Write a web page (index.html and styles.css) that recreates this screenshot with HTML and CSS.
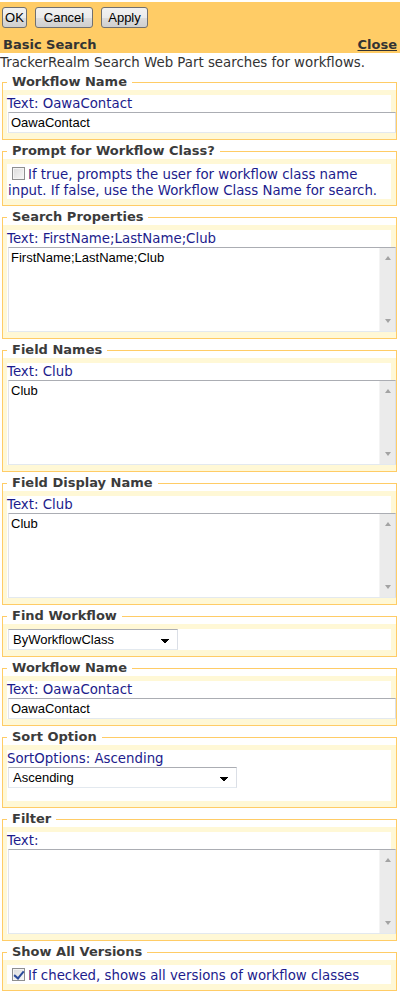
FILE: index.html
```html
<!DOCTYPE html>
<html>
<head>
<meta charset="utf-8">
<title>TrackerRealm Search Web Part</title>
<link rel="stylesheet" href="styles.css">
</head>
<body>
<div class="toolpane">
  <div class="tp-head">
    <div class="tp-buttons">
      <button class="btn btn-ok" type="button">OK</button>
      <button class="btn btn-cancel" type="button">Cancel</button>
      <button class="btn btn-apply" type="button">Apply</button>
    </div>
    <div class="tp-title">
      <span class="title">Basic Search</span>
      <a class="close" href="#">Close</a>
    </div>
  </div>
  <div class="tp-desc">TrackerRealm Search Web Part searches for workflows.</div>

  <fieldset class="grp">
    <legend>Workflow Name</legend>
    <div class="grp-body">
      <div class="ctl">
        <div class="lbl">Text: OawaContact</div>
        <input class="txt" type="text" value="OawaContact">
      </div>
    </div>
  </fieldset>

  <fieldset class="grp">
    <legend>Prompt for Workflow Class?</legend>
    <div class="grp-body">
      <div class="ctl chk-ctl">
        <label><input class="chk" type="checkbox">If true, prompts the user for workflow class name input. If false, use the Workflow Class Name for search.</label>
      </div>
    </div>
  </fieldset>

  <fieldset class="grp">
    <legend>Search Properties</legend>
    <div class="grp-body">
      <div class="ctl">
        <div class="lbl">Text: FirstName;LastName;Club</div>
        <div class="area">
          <textarea class="area-input">FirstName;LastName;Club</textarea>
          <div class="vscroll" aria-hidden="true"><span class="arr arr-up"></span><span class="arr arr-down"></span></div>
        </div>
      </div>
    </div>
  </fieldset>

  <fieldset class="grp">
    <legend>Field Names</legend>
    <div class="grp-body">
      <div class="ctl">
        <div class="lbl">Text: Club</div>
        <div class="area">
          <textarea class="area-input">Club</textarea>
          <div class="vscroll" aria-hidden="true"><span class="arr arr-up"></span><span class="arr arr-down"></span></div>
        </div>
      </div>
    </div>
  </fieldset>

  <fieldset class="grp">
    <legend>Field Display Name</legend>
    <div class="grp-body">
      <div class="ctl">
        <div class="lbl">Text: Club</div>
        <div class="area">
          <textarea class="area-input">Club</textarea>
          <div class="vscroll" aria-hidden="true"><span class="arr arr-up"></span><span class="arr arr-down"></span></div>
        </div>
      </div>
    </div>
  </fieldset>

  <fieldset class="grp">
    <legend>Find Workflow</legend>
    <div class="grp-body">
      <div class="ctl">
        <select class="sel sel-find">
          <option>ByWorkflowClass</option>
        </select>
      </div>
    </div>
  </fieldset>

  <fieldset class="grp">
    <legend>Workflow Name</legend>
    <div class="grp-body">
      <div class="ctl">
        <div class="lbl">Text: OawaContact</div>
        <input class="txt" type="text" value="OawaContact">
      </div>
    </div>
  </fieldset>

  <fieldset class="grp">
    <legend>Sort Option</legend>
    <div class="grp-body">
      <div class="ctl sort-ctl">
        <div class="lbl">SortOptions: Ascending</div>
        <select class="sel sel-sort">
          <option>Ascending</option>
        </select>
      </div>
    </div>
  </fieldset>

  <fieldset class="grp">
    <legend>Filter</legend>
    <div class="grp-body">
      <div class="ctl">
        <div class="lbl">Text:</div>
        <div class="area">
          <textarea class="area-input"></textarea>
          <div class="vscroll" aria-hidden="true"><span class="arr arr-up"></span><span class="arr arr-down"></span></div>
        </div>
      </div>
    </div>
  </fieldset>

  <fieldset class="grp">
    <legend>Show All Versions</legend>
    <div class="grp-body">
      <div class="ctl chk-ctl">
        <label><input class="chk" type="checkbox" checked>If checked, shows all versions of workflow classes</label>
      </div>
    </div>
  </fieldset>
</div>
</body>
</html>
```

FILE: styles.css
```css
* {
  box-sizing: border-box;
}

html,
body {
  margin: 0;
  padding: 0;
  background: #ffffff;
}

body {
  width: 400px;
  font-family: "DejaVu Sans", Verdana, sans-serif;
  font-size: 13.33px;
  color: #333333;
}

/* ---------- header ---------- */
.tp-head {
  margin-top: 2px;
  height: 51px;
  background: #ffcc66;
  padding: 5px 3px 0 2px;
}

.tp-buttons {
  display: flex;
  gap: 7px;
  height: 21px;
}

.btn {
  height: 21px;
  padding: 0;
  font-family: "Liberation Sans", Arial, sans-serif;
  font-size: 13px;
  color: #000000;
  border: 1px solid #707070;
  border-radius: 3px;
  background: linear-gradient(#f2f2f2 0%, #ebebeb 50%, #dddddd 51%, #cfcfcf 100%);
}

.btn-ok {
  width: 25px;
}

.btn-cancel {
  width: 58px;
  margin-left: 1px;
}

.btn-apply {
  width: 47px;
  margin-left: 1px;
}

.tp-title {
  display: flex;
  justify-content: space-between;
  margin-top: 9px;
  padding-left: 1px;
  line-height: 16px;
  font-size: 13px;
  font-weight: bold;
  color: #333333;
}

.close {
  color: #333333;
  text-decoration: underline;
}

.tp-desc {
  padding-top: 2px;
  line-height: 16px;
  margin-bottom: 3px;
}

/* ---------- groups ---------- */
.grp {
  margin: 0 3px 3px 2px;
  padding: 0;
  min-width: 0;
  border: 1px solid #ffcc66;
}

.grp legend {
  margin-left: 4px;
  padding: 0 5px;
  font-size: 13px;
  font-weight: bold;
  line-height: 16px;
  color: #3b3b3b;
}

.grp-body {
  background: #fff8d6;
  padding: 5px 5px 6px 4px;
}

.ctl {
  background: #ffffff;
}

.lbl {
  color: #1c1c8c;
  line-height: 17px;
  white-space: nowrap;
}

.txt,
.area {
  display: block;
  width: calc(100% + 4px);
  margin-left: 1px;
  background: #ffffff;
  border: 1px solid;
  border-color: #abadb3 #dbdfe6 #e3e9ef #e2e3ea;
}

.txt {
  height: 21px;
  padding: 1px 2px;
  font-family: "Liberation Sans", Arial, sans-serif;
  font-size: 13px;
  color: #000000;
  outline: none;
}

/* multi-line text box with a disabled classic scrollbar */
.area {
  display: flex;
  height: 85px;
}

.area-input {
  flex: 1;
  min-width: 0;
  height: 100%;
  margin: 0;
  padding: 2px 2px;
  border: 0;
  outline: none;
  resize: none;
  overflow: hidden;
  font-family: "Liberation Sans", Arial, sans-serif;
  font-size: 13px;
  line-height: 15px;
  color: #000000;
  background: #ffffff;
}

.vscroll {
  display: flex;
  flex-direction: column;
  justify-content: space-between;
  align-items: center;
  width: 16px;
  padding: 8px 0 8px 0;
  background: #ebebeb;
  border-left: 1px solid #f4f4f4;
}

.arr {
  width: 0;
  height: 0;
  border-left: 3.5px solid transparent;
  border-right: 3.5px solid transparent;
}

.arr-up {
  border-bottom: 4px solid #a3a3a3;
}

.arr-down {
  border-top: 4px solid #a3a3a3;
}

.sel {
  display: block;
  height: 21px;
  margin-left: 1px;
  padding: 0 0 0 4px;
  font-family: "Liberation Sans", Arial, sans-serif;
  font-size: 13px;
  color: #000000;
  border: 1px solid;
  border-color: #abadb3 #dbdfe6 #e3e9ef #e2e3ea;
  border-radius: 0;
  appearance: none;
  -webkit-appearance: none;
  background-color: #ffffff;
  background-image: linear-gradient(45deg, transparent 50%, #000000 50%),
    linear-gradient(315deg, transparent 50%, #000000 50%);
  background-position: calc(100% - 12px) 9px, calc(100% - 8px) 9px;
  background-size: 4px 4px;
  background-repeat: no-repeat;
}

.sel-find {
  width: 170px;
}

.sel-sort {
  width: 229px;
}

.sort-ctl {
  padding-bottom: 13px;
}

/* ---------- checkbox rows ---------- */
.chk-ctl {
  padding-left: 1px;
  color: #1c1c8c;
  line-height: 16px;
}

.chk {
  -webkit-appearance: none;
  appearance: none;
  position: relative;
  width: 13px;
  height: 13px;
  margin: 3px 3px 3px 4px;
  vertical-align: -4px;
  border: 1px solid #8e8f8f;
  background: linear-gradient(135deg, #dcdcdc 0%, #f7f7f7 100%);
  box-shadow: inset 0 0 0 1px #f4f4f4;
}

.chk:checked::after {
  content: "";
  position: absolute;
  left: 3px;
  top: 0px;
  width: 4px;
  height: 8px;
  border: solid #2a4a9a;
  border-width: 0 2px 2px 0;
  transform: rotate(40deg);
}
```
